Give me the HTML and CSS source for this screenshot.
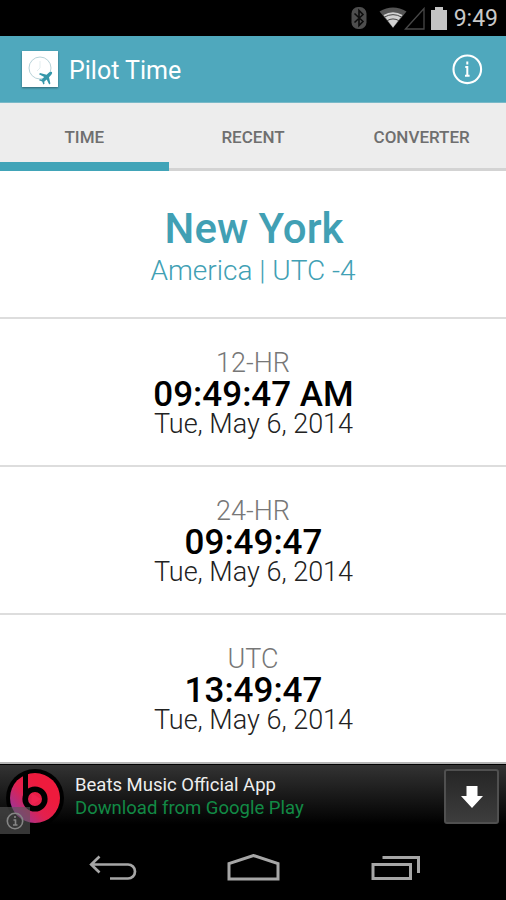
FILE: index.html
```html
<!DOCTYPE html>
<html lang="en">
<head>
    <meta charset="UTF-8">
    <meta name="viewport" content="width=device-width, initial-scale=1.0">
    <title>Pilot Time</title>
    <link rel="stylesheet" href="styles.css">
</head>
<body>
    <div class="status-bar">
        <svg class="bluetooth" width="16" height="24" viewBox="0 0 16 24">
            <rect x="0.5" y="1" width="15" height="22" rx="6.5" fill="#4d4d4d"/>
            <path d="M3.5 7.5L12 15.5L8 19.5V4.5L12 8.5L3.5 16.5" fill="none" stroke="#0c0c0c" stroke-width="1.6"/>
        </svg>
        <svg class="wifi" width="28" height="22" viewBox="0 0 28 22">
            <path d="M0.5 4.5Q14 -3.5 27.5 4.5L14 21Z" fill="#555"/>
            <path d="M4.5 8Q14 2.5 23.5 8L14 20.5Z" fill="#d2d2d2"/>
            <path d="M5.5 10Q14 5.3 22.5 10M8 13.7Q14 10.2 20 13.7" fill="none" stroke="#444" stroke-width="1"/>
        </svg>
        <svg class="signal" width="21" height="23" viewBox="0 0 21 23">
            <path d="M1.5 22L20 1.5V22Z" fill="none" stroke="#484848" stroke-width="1.3"/>
        </svg>
        <svg class="battery" width="16" height="23" viewBox="0 0 16 23">
            <path d="M0 3H4V0H12V3H16V23H0Z" fill="#c4c4c4"/>
        </svg>
        <span class="clock">9:49</span>
    </div>

    <div class="header">
        <svg class="logo" width="36" height="36" viewBox="0 0 36 36">
            <rect width="36" height="36" fill="#fff"/>
            <circle cx="18" cy="17" r="11" fill="none" stroke="#b9d3d9" stroke-width="1"/>
            <path d="M18 10V17L15 20" fill="none" stroke="#e3eef0" stroke-width="1"/>
            <path d="M30 21Q28.5 20.3 27 21.5L24.6 23.7L18 22L17 23.2L22.2 26L19.8 28.6L17.8 28.2L17 29.2L20.2 30.6L21.3 33.5L22.5 32.8L22.2 30.8L24.7 28.6L27.2 33.4L28.4 32.5L27 26.2L29.3 23.8Q30.6 22.2 30 21Z" fill="#3597aa"/>
        </svg>
        <h1>Pilot Time</h1>
        <svg class="info" width="32" height="32" viewBox="0 0 32 32">
            <circle cx="16.3" cy="16.3" r="13.8" fill="none" stroke="#fff" stroke-width="2.1"/>
            <path d="M16.3 8.6V11.4M14.3 14H16.3V22.8M14 22.8H18.6" fill="none" stroke="#fff" stroke-width="2"/>
        </svg>
    </div>

    <div class="tabs">
        <div class="tab active">TIME</div>
        <div class="tab">RECENT</div>
        <div class="tab">CONVERTER</div>
    </div>

    <div class="city">
        <h2>New York</h2>
        <p>America | UTC -4</p>
    </div>

    <div class="zone">
        <div class="label">12-HR</div>
        <div class="time">09:49:47 AM</div>
        <div class="date">Tue, May 6, 2014</div>
    </div>
    <div class="zone">
        <div class="label">24-HR</div>
        <div class="time">09:49:47</div>
        <div class="date">Tue, May 6, 2014</div>
    </div>
    <div class="zone last">
        <div class="label">UTC</div>
        <div class="time">13:49:47</div>
        <div class="date">Tue, May 6, 2014</div>
    </div>

    <div class="ad">
        <svg class="beats" width="58" height="58" viewBox="0 0 58 58">
            <defs>
                <linearGradient id="beatsFill" x1="0" y1="0.85" x2="0.65" y2="0.3">
                    <stop offset="0" stop-color="#8b3aa8"/>
                    <stop offset="0.6" stop-color="#e3204e"/>
                    <stop offset="1" stop-color="#ee1b3d"/>
                </linearGradient>
            </defs>
            <circle cx="29" cy="29" r="29" fill="#000"/>
            <circle cx="29" cy="29" r="25" fill="url(#beatsFill)"/>
            <path d="M19.5 4V30" stroke="#000" stroke-width="5"/>
            <circle cx="29" cy="30" r="9.8" fill="none" stroke="#000" stroke-width="5.6"/>
            <path d="M25.5 24L35 30L25.5 36Z" fill="#ee2350"/>
        </svg>
        <div class="ad-text">
            <div class="ad-title">Beats Music Official App</div>
            <div class="ad-link">Download from Google Play</div>
        </div>
        <div class="download">
            <svg width="24" height="24" viewBox="0 0 24 24">
                <path d="M6.5 1H17.5V11H23L12 23L1 11H6.5Z" fill="#fff"/>
            </svg>
        </div>
        <div class="ad-badge">
            <svg width="18" height="18" viewBox="0 0 18 18">
                <circle cx="9" cy="9" r="7.7" fill="none" stroke="#858585" stroke-width="1.6"/>
                <path d="M9 4V6M7.5 8H9.5V13M7 13H11.5" fill="none" stroke="#858585" stroke-width="1.6"/>
            </svg>
        </div>
    </div>

    <div class="nav-bar">
        <svg width="50" height="30" viewBox="0 0 50 30">
            <path d="M12.5 2.5L4.2 10.5L12.5 18.5M4.5 10.5H41A6.9 6.9 0 0 1 41 24.5H23" fill="none" stroke="#a6a6a6" stroke-width="2.7"/>
        </svg>
        <svg width="54" height="30" viewBox="0 0 54 30">
            <path d="M2 25V9.5L26.5 1.5L51 9.5V25Z" fill="none" stroke="#a6a6a6" stroke-width="3"/>
        </svg>
        <svg width="50" height="30" viewBox="0 0 50 30">
            <path d="M2 10.5H39.5V24.5H2Z" fill="none" stroke="#a6a6a6" stroke-width="3"/>
            <path d="M11.5 3.5H47.5V19" fill="none" stroke="#a6a6a6" stroke-width="3"/>
        </svg>
    </div>
</body>
</html>
```

FILE: styles.css
```css
* {
    box-sizing: border-box;
}
body {
    margin: 0;
    background-color: #FFFFFF;
    font-family: Roboto, sans-serif;
    text-align: center;
}
h1, h2, p {
    margin: 0;
}
svg {
    display: block;
    flex-shrink: 0;
}
.status-bar {
    display: flex;
    justify-content: flex-end;
    align-items: center;
    height: 36px;
    padding-right: 8px;
    background-color: #000000;
}
.wifi {
    margin-left: 12px;
}
.signal {
    margin-left: -3px;
}
.battery {
    margin: 0 7px 0 6px;
}
.clock {
    color: #C8C8C8;
    font-size: 23px;
    line-height: 36px;
    padding-top: 2px;
}
.header {
    display: flex;
    align-items: center;
    height: 67px;
    padding: 0 23px 0 22px;
    background-color: #4FA8BD;
    border-bottom: 1px solid #79B9C8;
}
.logo {
    box-shadow: 0 1px 2px rgba(0, 0, 0, 0.4);
}
.header h1 {
    flex: 1;
    margin-left: 11px;
    padding-top: 2px;
    color: #FFFFFF;
    font-size: 25px;
    font-weight: 400;
    text-align: left;
}
.tabs {
    display: flex;
    height: 68px;
    background-color: #EDEDED;
}
.tab {
    flex: 1;
    border-bottom: 3px solid #D3D3D3;
    color: #6F6F6F;
    font-size: 17px;
    font-weight: 500;
    line-height: 69px;
}
.tab.active {
    border-bottom: 9px solid #41A4B8;
}
.city {
    height: 148px;
    padding-top: 33px;
    border-bottom: 2px solid #DDDDDD;
    color: #41A0B4;
}
.city h2 {
    padding-left: 2px;
    font-size: 42px;
    font-weight: 500;
    line-height: 50px;
}
.city p {
    font-size: 28px;
    font-weight: 300;
    line-height: 34px;
}
.zone {
    height: 148px;
    padding-top: 29px;
    border-bottom: 2px solid #DDDDDD;
    color: #000000;
}
.zone.last {
    height: 149px;
    border-bottom-color: #B5B5B5;
}
.label {
    color: #777777;
    font-size: 27px;
    font-weight: 300;
    line-height: 31px;
}
.time {
    padding-left: 1px;
    font-size: 35px;
    font-weight: 500;
    line-height: 31px;
}
.date {
    padding-left: 1px;
    color: #222222;
    font-size: 27px;
    font-weight: 300;
    line-height: 29px;
}
.ad {
    position: relative;
    display: flex;
    height: 71px;
    padding: 4px 7px 0 6px;
    background: linear-gradient(#333333, #000000 85%);
    border-top: 1px solid #000000;
    text-align: left;
}
.ad-text {
    flex: 1;
    padding: 5px 0 0 11px;
    font-size: 18.5px;
    line-height: 23px;
}
.ad-title {
    color: #EEEEEE;
}
.ad-link {
    color: #128A45;
}
.download {
    display: flex;
    justify-content: center;
    align-items: center;
    width: 55px;
    height: 55px;
    border: 2px solid #505050;
    border-radius: 3px;
    background: linear-gradient(#262626, #3D3D3D);
}
.ad-badge {
    position: absolute;
    left: 0;
    top: 42px;
    display: flex;
    justify-content: center;
    align-items: center;
    width: 30px;
    height: 27px;
    background-color: rgba(90, 90, 90, 0.6);
}
.nav-bar {
    display: flex;
    justify-content: space-between;
    height: 65px;
    padding: 19px 85px 0 87px;
    background-color: #000000;
}
```
